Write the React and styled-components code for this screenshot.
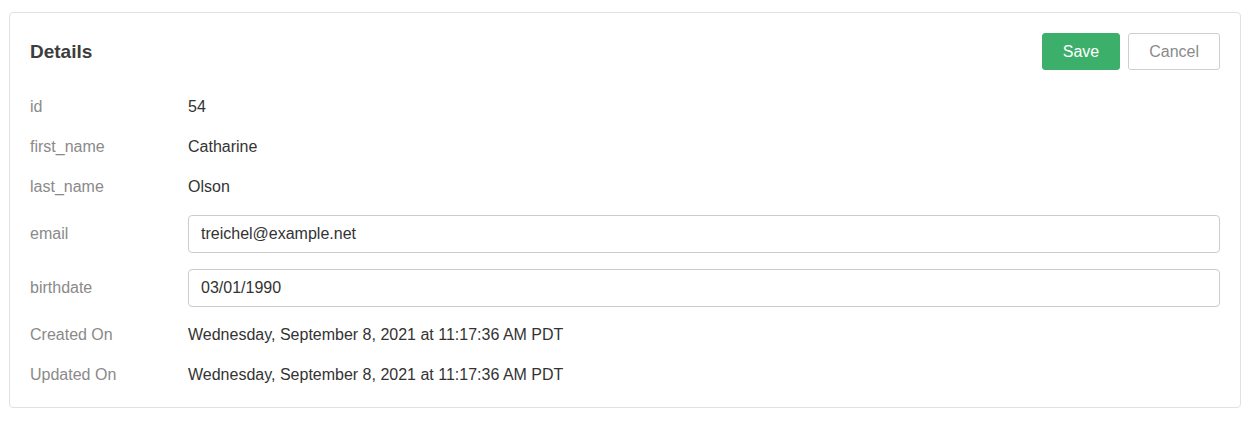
import styled, { createGlobalStyle } from "styled-components";

const GlobalStyle = createGlobalStyle`
  body {
    margin: 0;
    background: #fff;
    font-family: "Liberation Sans", Arial, Helvetica, sans-serif;
    color: #333;
  }
`;

const Page = styled.div`
  padding: 12px 14px 0 9px;
`;

const Card = styled.div`
  border: 1px solid #e1e1e1;
  border-radius: 4px;
  padding: 20px 20px 12px 20px;
`;

const Header = styled.div`
  display: flex;
  align-items: center;
  justify-content: space-between;
  height: 37px;
  margin-bottom: 17px;
`;

const Title = styled.h2`
  margin: 0;
  font-size: 19px;
  font-weight: 600;
  color: #3d3d3d;
`;

const Actions = styled.div`
  display: flex;
  gap: 8px;
`;

const Button = styled.button`
  height: 37px;
  padding: 0 20px;
  border-radius: 3px;
  font-family: inherit;
  font-size: 16px;
  cursor: pointer;
  border: 1px solid ${(p) => (p.$primary ? "#3cb06b" : "#cfcfcf")};
  background: ${(p) => (p.$primary ? "#3cb06b" : "#fff")};
  color: ${(p) => (p.$primary ? "#fff" : "#8a8a8a")};
`;

const Row = styled.div`
  display: flex;
  align-items: center;
  min-height: ${(p) => (p.$input ? "38px" : "40px")};
  padding: ${(p) => (p.$input ? "8px 0" : "0")};
`;

const Label = styled.div`
  width: 158px;
  flex-shrink: 0;
  font-size: 16px;
  color: #8a8a8a;
`;

const Value = styled.div`
  font-size: 16px;
  color: #333;
`;

const Input = styled.input`
  flex: 1;
  height: 38px;
  box-sizing: border-box;
  border: 1px solid #cccccc;
  border-radius: 4px;
  padding: 0 12px;
  font-family: inherit;
  font-size: 16px;
  color: #333;
  outline: none;
`;

const fields = [
  { label: "id", value: "54" },
  { label: "first_name", value: "Catharine" },
  { label: "last_name", value: "Olson" },
  { label: "email", value: "treichel@example.net", edit: true },
  { label: "birthdate", value: "03/01/1990", edit: true },
  { label: "Created On", value: "Wednesday, September 8, 2021 at 11:17:36 AM PDT" },
  { label: "Updated On", value: "Wednesday, September 8, 2021 at 11:17:36 AM PDT" },
];

const App = () => {
  return (
    <>
      <GlobalStyle />
      <Page>
        <Card>
          <Header>
            <Title>Details</Title>
            <Actions>
              <Button $primary>Save</Button>
              <Button>Cancel</Button>
            </Actions>
          </Header>
          {fields.map((f) => (
            <Row key={f.label} $input={f.edit}>
              <Label>{f.label}</Label>
              {f.edit ? (
                <Input defaultValue={f.value} />
              ) : (
                <Value>{f.value}</Value>
              )}
            </Row>
          ))}
        </Card>
      </Page>
    </>
  );
};

export default App;
